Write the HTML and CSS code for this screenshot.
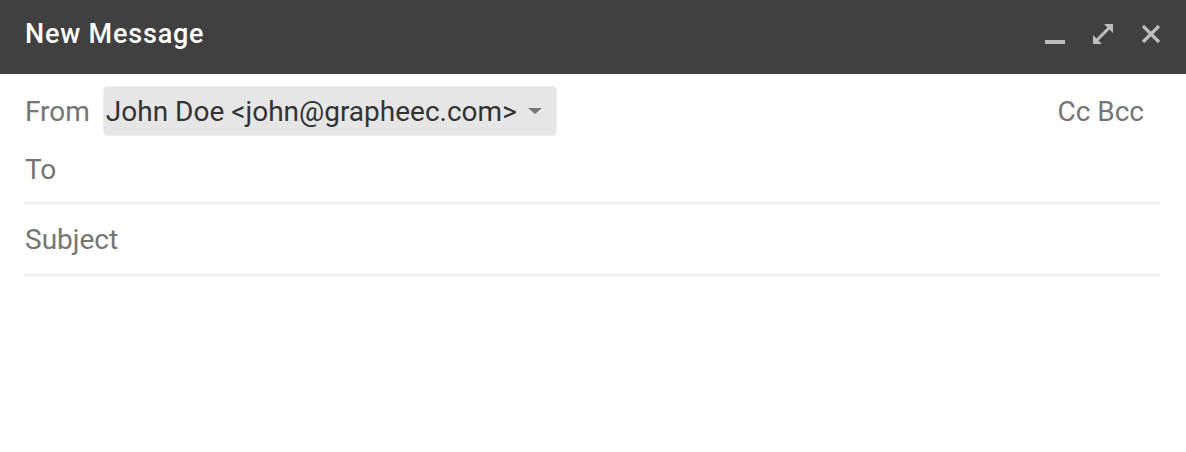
FILE: index.html
```html
<!DOCTYPE html>
<html>
<head>
<meta charset="utf-8">
<link rel="stylesheet" href="styles.css">
</head>
<body>
<div class="compose">
  <div class="header">
    <div class="title">New Message</div>
    <div class="actions">
      <svg class="icon" width="20" height="20" viewBox="0 0 20 20"><rect x="0" y="16" width="20" height="4" fill="#bdbdbd"/></svg>
      <svg class="icon" width="20" height="20" viewBox="0 0 20 20"><path d="M20 0V9L11 0Z M0 20V11L9 20Z" fill="#bdbdbd"/><path d="M3.5 16.5L16.5 3.5" stroke="#bdbdbd" stroke-width="3"/></svg>
      <svg class="icon" width="20" height="20" viewBox="0 0 20 20"><path d="M2 2L18 18M18 2L2 18" stroke="#bdbdbd" stroke-width="3.2"/></svg>
    </div>
  </div>
  <div class="body">
    <div class="row from-row">
      <span class="label">From</span>
      <div class="select">John Doe &lt;john@grapheec.com&gt;<span class="caret"></span></div>
      <span class="cc">Cc Bcc</span>
    </div>
    <div class="row field to">To</div>
    <div class="row field">Subject</div>
  </div>
</div>
</body>
</html>
```
FILE: styles.css
```css
html, body { margin: 0; padding: 0; background: #fff; }
body { font-family: Roboto, "Noto Sans", sans-serif; }
.header {
  height: 74px;
  box-sizing: border-box;
  background: #404040;
  display: flex;
  align-items: center;
  justify-content: space-between;
  padding: 0 25px 6px 25px;
}
.title { color: #fff; font-size: 27px; font-weight: 500; letter-spacing: 0.8px; }
.actions { display: flex; align-items: center; gap: 28px; }
.icon { display: block; }
.body { padding: 0 26px 0 24px; }
.from-row {
  display: flex;
  align-items: center;
  height: 62px;
  padding-top: 12px;
  box-sizing: border-box;
}
.label { color: #757575; font-size: 28px; margin-left: 1px; }
.select {
  margin-left: 13px;
  height: 50px;
  width: 454px;
  box-sizing: border-box;
  background: #e6e6e6;
  border: 1px solid #f0f0f0;
  border-radius: 4px;
  color: #333;
  font-size: 28px;
  display: flex;
  align-items: center;
  padding-left: 2px;
}
.caret {
  margin-left: 11px;
  width: 0; height: 0;
  border-left: 7px solid transparent;
  border-right: 7px solid transparent;
  border-top: 6px solid #757575;
}
.cc { margin-left: auto; color: #757575; font-size: 28px; margin-right: 16px; }
.field {
  color: #757575;
  font-size: 28px;
  height: 72px;
  box-sizing: border-box;
  border-bottom: 2px solid #eceeef;
  display: flex;
  align-items: center;
  padding-left: 1px;
}
.field.to { height: 68px; }
```
